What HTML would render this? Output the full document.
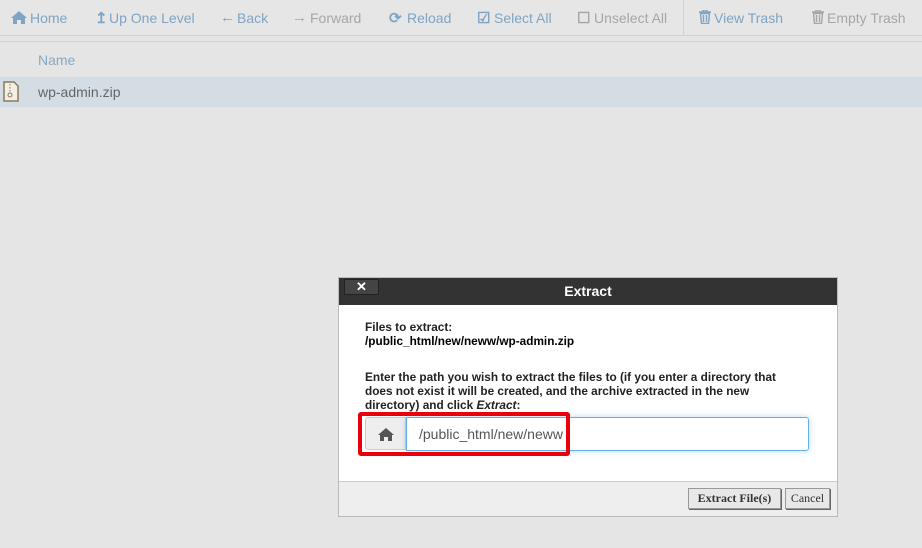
<!DOCTYPE html><html><head><style>
body{margin:0;width:922px;height:548px;background:#e5e5e5;font-family:"Liberation Sans",sans-serif;position:relative;overflow:hidden}
.tb{position:absolute;top:0;left:0;width:922px;height:35px;border-bottom:1px solid #d2d2d2;background:#e6e6e6}
.tb span{position:absolute;top:10px;font-size:14px;color:#7fa4c4}
.tb .d{color:#a6a6a6}
.tb i{position:absolute;top:9px;font-style:normal;font-size:15px;color:#7fa4c4;font-weight:bold}
.tb i.d{color:#a6a6a6}
.hd{position:absolute;top:41px;left:0;width:922px;height:35px;border-top:1px solid #d2d2d2;border-bottom:1px solid #ccc}
.hd span{position:absolute;left:38px;top:10px;font-size:14px;color:#86a8c6}
.row{position:absolute;top:77px;left:0;width:922px;height:30px;background:#d3dde3}
.row span{position:absolute;left:38px;top:7px;font-size:14px;color:#666}
.dlg{position:absolute;left:338px;top:277px;width:500px;height:240px;background:#fff;border:1px solid #bbb;box-sizing:border-box}
.tit{height:27px;background:#333;color:#fff;font-weight:bold;font-size:14px;text-align:center;line-height:27px}
.x{position:absolute;left:5px;top:1px;width:33px;height:14px;background:#444;border:1px solid #222;border-radius:2px;color:#fff;font-size:13px;line-height:13px;text-align:center;font-weight:bold}
.b{position:absolute;left:26px;font-size:11.8px;color:#222;font-weight:bold;line-height:14px}
.ft{position:absolute;left:0;top:203px;width:498px;height:35px;background:#eee;border-top:1px solid #ccc;box-sizing:border-box}
.btn{position:absolute;top:6px;height:19px;border:1px solid #999;background:#e8e8e8;font-family:"Liberation Serif",serif;font-size:12px;line-height:19px;text-align:center;color:#333;box-shadow:1px 1px 0 #666}
</style></head><body>
<div class="tb">
<svg style="position:absolute;left:11px;top:11px" width="16" height="13" viewBox="0 0 16 13"><path d="M8 0L0 7h2v6h4V9h4v4h4V7h2z" fill="#7fa4c4"/></svg><span style="left:30px">Home</span>
<i style="left:95px">↥</i><span style="left:109px">Up One Level</span>
<i style="left:220px">←</i><span style="left:237px">Back</span>
<i class="d" style="left:292px">→</i><span class="d" style="left:310px">Forward</span>
<i style="left:389px">⟳</i><span style="left:407px">Reload</span>
<i style="left:477px">☑</i><span style="left:494px">Select All</span>
<i class="d" style="left:577px">☐</i><span class="d" style="left:594px">Unselect All</span>
<svg style="position:absolute;left:699px;top:10px" width="12" height="14" viewBox="0 0 12 14"><path d="M0 2h12M4 2V0h4v2M1.5 3.5h9l-1 10h-7z M4.5 5v7M7.5 5v7" fill="none" stroke="#7fa4c4" stroke-width="1.4"/></svg><span style="left:714px">View Trash</span>
<svg style="position:absolute;left:812px;top:10px" width="12" height="14" viewBox="0 0 12 14"><path d="M0 2h12M4 2V0h4v2M1.5 3.5h9l-1 10h-7z M4.5 5v7M7.5 5v7" fill="none" stroke="#a6a6a6" stroke-width="1.4"/></svg><span class="d" style="left:827px">Empty Trash</span>
</div>
<div style="position:absolute;left:683px;top:0;width:1px;height:35px;background:#d2d2d2"></div>
<div class="hd"><span>Name</span></div>
<div class="row"><svg style="position:absolute;left:3px;top:4px" width="16" height="21"><path d="M1 1h10l4 4v15H1z" fill="#f4efe4" stroke="#8a7a60" stroke-width="1.5"/><path d="M7 3v8" stroke="#8a7a60" stroke-dasharray="1.5 1.5"/><circle cx="7" cy="14" r="2" fill="none" stroke="#8a7a60"/></svg><span>wp-admin.zip</span></div>
<div class="dlg">
<div class="tit">Extract</div><div class="x">✕</div>
<div class="b" style="top:42px">Files to extract:<br><span style="color:#000">/public_html/new/neww/wp-admin.zip</span></div>
<div class="b" style="top:92px;width:422px">Enter the path you wish to extract the files to (if you enter a directory that does not exist it will be created, and the archive extracted in the new directory) and click <i>Extract</i>:</div>
<div style="position:absolute;left:26px;top:139px;width:41px;height:33px;background:#eee;border:1px solid #ccc;border-radius:3px 0 0 3px;box-sizing:border-box"><svg style="position:absolute;left:12px;top:10px" width="16" height="13" viewBox="0 0 16 13"><path d="M8 0L0 7h2v6h4V9h4v4h4V7h2z" fill="#555"/></svg></div>
<div style="position:absolute;left:67px;top:139px;width:403px;height:34px;border:1px solid #66afe9;box-sizing:border-box;border-radius:0 3px 3px 0;box-shadow:0 0 6px rgba(102,175,233,.5);font-size:14px;color:#555;line-height:32px;padding-left:12px">/public_html/new/neww</div>
<div style="position:absolute;left:19px;top:134px;width:212px;height:44px;border:4px solid #e8000b;box-sizing:border-box;border-radius:3px"></div>
<div class="ft"><div class="btn" style="left:349px;width:91px;font-weight:bold">Extract File(s)</div><div class="btn" style="left:446px;width:43px">Cancel</div></div>
</div>
</body></html>
